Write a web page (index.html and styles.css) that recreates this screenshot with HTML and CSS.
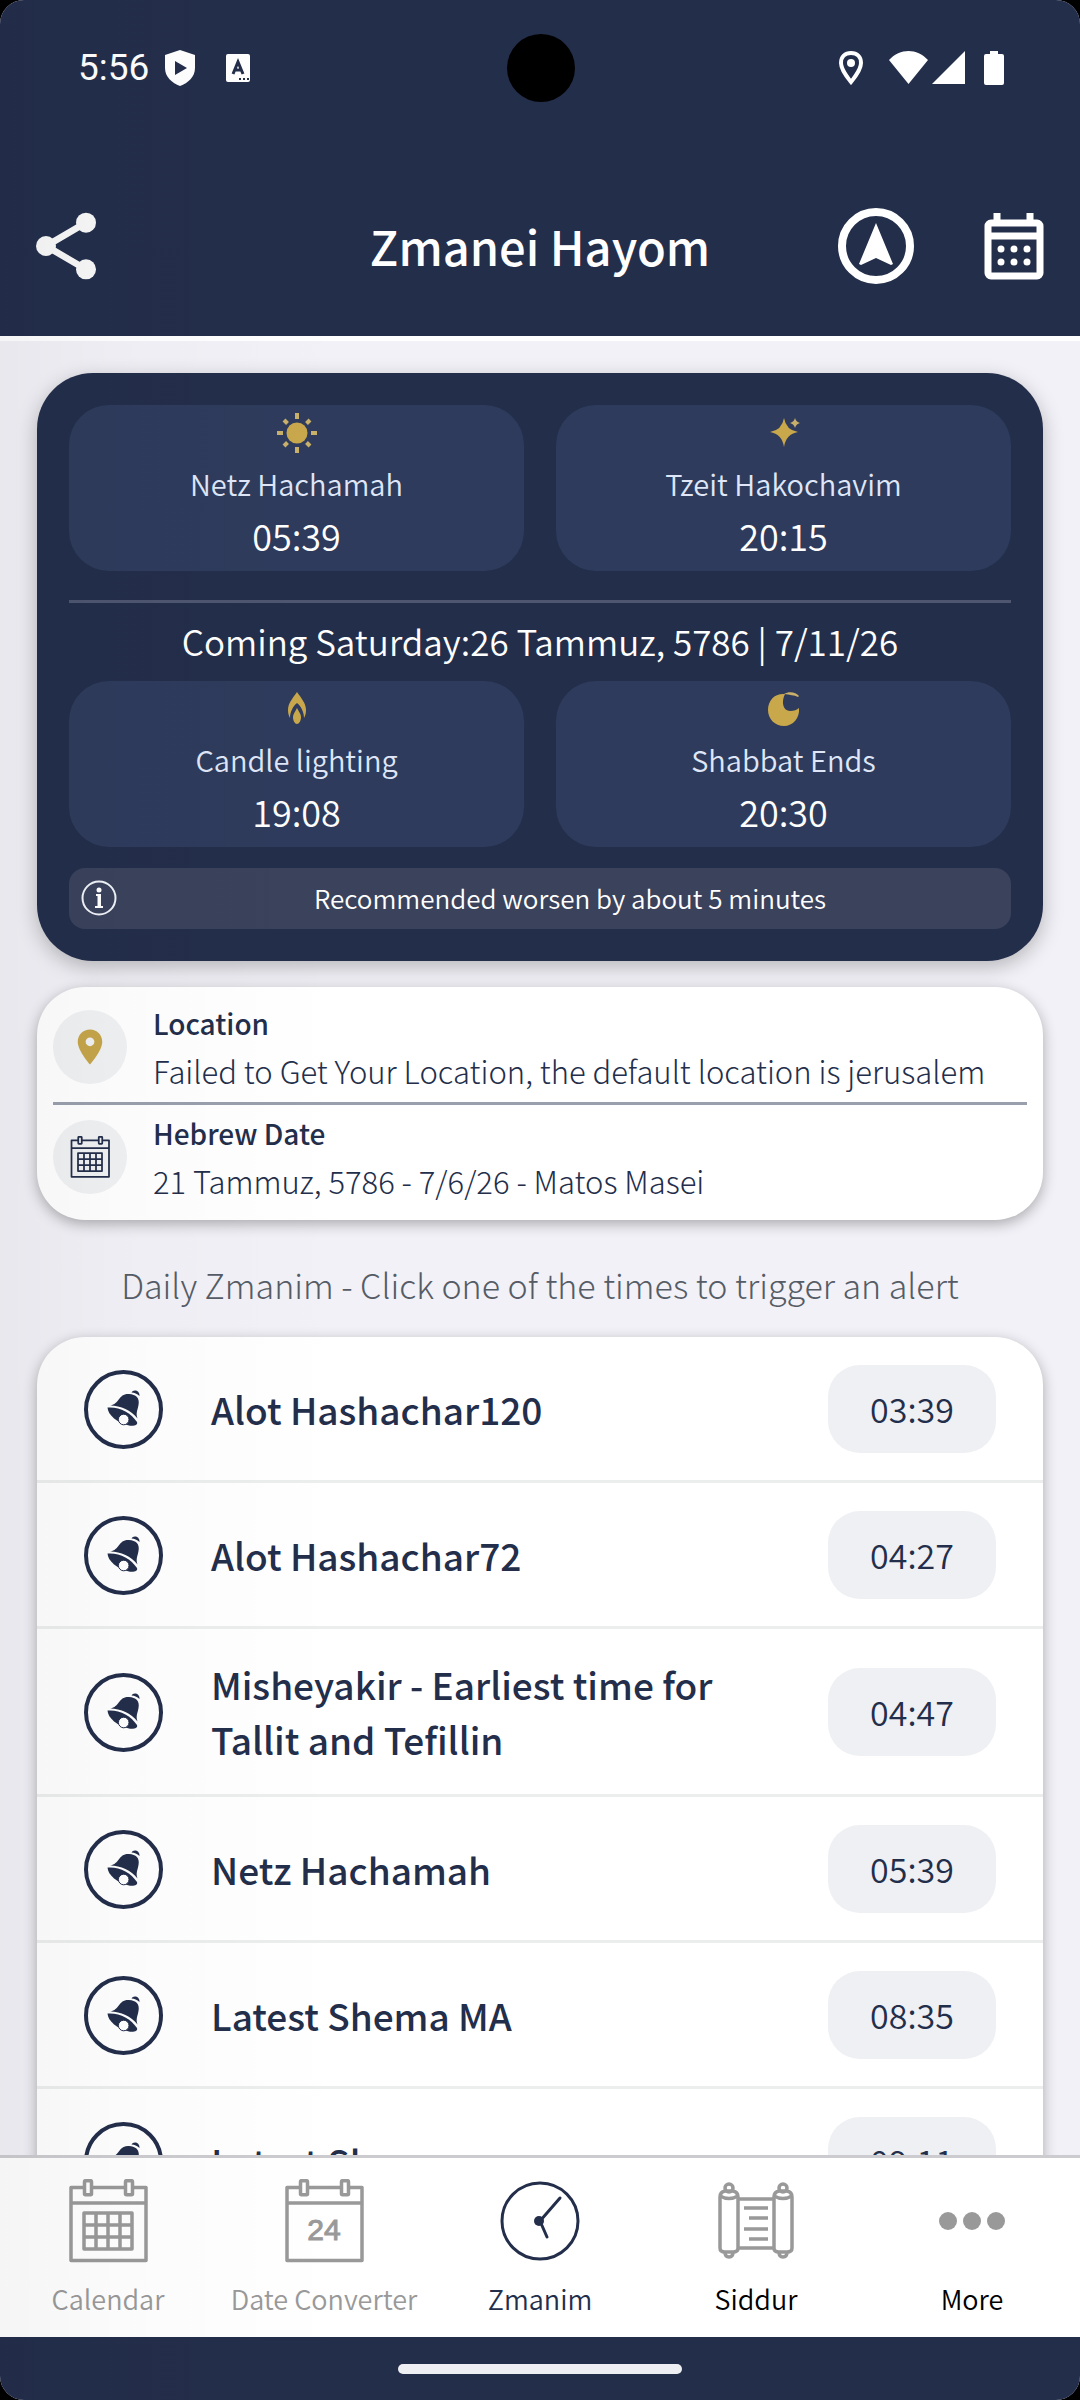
FILE: index.html
```html
<!DOCTYPE html>
<html lang="en">
<head>
    <meta charset="UTF-8">
    <meta name="viewport" content="width=device-width, initial-scale=1.0">
    <title>Zmanei Hayom</title>
    <link rel="stylesheet" href="styles.css">
</head>
<body>
    <!-- shared icons -->
    <svg class="symbols" aria-hidden="true">
        <symbol id="icon-calendar" viewBox="0 0 84 84">
            <g fill="none" stroke="currentColor" stroke-width="3.500" stroke-linejoin="round">
                <path d="M18 8.500H5v73h75v-73H67M26 8.500h33M5 24h75"/>
                <rect x="18.500" y="1.700" width="7" height="14" rx="1"/>
                <rect x="59.500" y="1.700" width="7" height="14" rx="1"/>
                <path d="M18 34h48v36H18zM30 34v36M42 34v36M54 34v36M18 46h48M18 58h48"/>
            </g>
        </symbol>
        <symbol id="icon-bell" viewBox="0 0 40 40">
            <path fill="currentColor" d="M27.500 3.500C29 0 36 1 35.500 7c-2.500-2.500-5-3.300-8-3.500z"/>
            <path fill="currentColor" d="M6 16.500C16 15 14 4.500 25 5c7 .5 11 4 9.500 11-.8 5-3 8-1 13.500C27 21 17 17 6 16.500z"/>
            <path fill="currentColor" d="M3.500 18.500c12-1 23 5 29.500 14.500 1 3-2 4-7 3.700C13 34 4 26 3.500 18.500z"/>
            <circle cx="19.700" cy="30.500" r="5.300" fill="#fff" stroke="currentColor"/>
        </symbol>
    </svg>

    <div class="app">
        <header>
            <div class="status-bar">
                <div class="status-group">
                    <span class="clock">5:56</span>
                    <svg width="30" height="36" viewBox="0 0 30 36"><path fill="#fff" d="M15 0l15 5v13c0 9-7 15-15 18C7 33 0 27 0 18V5z"/><path fill="#232e4b" d="M10 11l12 7-12 7z"/></svg>
                    <svg class="lang-icon" width="24" height="28" viewBox="0 0 24 28"><rect width="24" height="28" rx="2" fill="#fff"/><path d="M7 20l5-12 5 12M9 16h6" fill="none" stroke="#232e4b" stroke-width="3"/><path d="M13 25h2M17 25h2M21 25h2" stroke="#232e4b" stroke-width="2"/></svg>
                </div>
                <span class="camera"></span>
                <div class="status-group status-right">
                    <svg width="24" height="34" viewBox="0 0 24 34"><path d="M12 2C6 2 2 6 2 12c0 7 10 19 10 19s10-12 10-19c0-6-4-10-10-10z" fill="none" stroke="#fff" stroke-width="4"/><circle cx="12" cy="12" r="4" fill="#fff"/></svg>
                    <svg class="wifi" width="76" height="34" viewBox="0 0 76 34"><path fill="#fff" d="M0 9c11-12 28-12 39 0L19.500 33zM43 33L76 0v33z"/></svg>
                    <svg width="20" height="34" viewBox="0 0 20 34"><path fill="#fff" d="M6 0h8v3h4q2 0 2 2v27q0 2-2 2H2q-2 0-2-2V5q0-2 2-2h4z"/></svg>
                </div>
            </div>
            <div class="app-bar">
                <button type="button" class="icon-button" aria-label="Share">
                    <svg viewBox="0 0 24 24"><path d="M18 5L6 12l12 7" fill="none" stroke="#f8f8f8" stroke-width="2"/><circle cx="18" cy="5" r="3" fill="#f8f8f8"/><circle cx="6" cy="12" r="3" fill="#f8f8f8"/><circle cx="18" cy="19" r="3" fill="#f8f8f8"/></svg>
                </button>
                <h1>Zmanei Hayom</h1>
                <div class="actions">
                    <button type="button" class="icon-button" aria-label="Compass">
                        <svg viewBox="0 0 80 80"><circle cx="40" cy="40" r="34" fill="none" stroke="#fff" stroke-width="8"/><path fill="#fff" d="M40 17l17 41-2 1-15-7-15 7-2-1z"/></svg>
                    </button>
                    <button type="button" class="icon-button" aria-label="Pick a date">
                        <svg viewBox="0 0 80 80"><g fill="none" stroke="#fff" stroke-width="7"><rect x="14" y="17" width="52" height="53" rx="3"/><path d="M14 30h52M23 7v9M56 7v9"/></g><g fill="#fff"><circle cx="27" cy="43" r="3.500"/><circle cx="40" cy="43" r="3.500"/><circle cx="53" cy="43" r="3.500"/><circle cx="27" cy="56" r="3.500"/><circle cx="40" cy="56" r="3.500"/><circle cx="53" cy="56" r="3.500"/></g></svg>
                    </button>
                </div>
            </div>
        </header>

        <main>
            <section class="summary">
                <div class="tiles">
                    <div class="tile">
                        <svg viewBox="0 0 40 40"><circle cx="20" cy="20" r="10.500" fill="#c9a84c"/><path d="M20 0v6M20 34v6M0 20h6M34 20h6M7 7l3.500 3.500M29.500 29.500L33 33M7 33l3.500-3.500M29.500 10.500L33 7" stroke="#c9b06a" stroke-width="4"/></svg>
                        <span class="tile-label">Netz Hachamah</span>
                        <span class="tile-time">05:39</span>
                    </div>
                    <div class="tile">
                        <svg viewBox="0 0 40 40"><path fill="#c9a84c" d="M20 5q2 12 14 14-12 2-14 15-2-13-14-15 12-2 14-14z"/><path fill="#c9b06a" d="M31 5q1 4 5 5-4 1-5 5-1-4-5-5 4-1 5-5z"/></svg>
                        <span class="tile-label">Tzeit Hakochavim</span>
                        <span class="tile-time">20:15</span>
                    </div>
                </div>
                <h2>Coming Saturday:26 Tammuz, 5786 | 7/11/26</h2>
                <div class="tiles">
                    <div class="tile">
                        <svg viewBox="0 0 40 40"><path fill="#c9a84c" d="M20 3c4 6 9 11 9 18 0 4-1 6-2 8 0-6-3-12-7-15-4 3-7 9-7 15-1-2-2-4-2-8 0-7 5-12 9-18z"/><path fill="#c9a84c" d="M20 19c2 4 4 6 4 9 0 4-2 7-4 7s-4-3-4-7c0-3 2-5 4-9z"/></svg>
                        <span class="tile-label">Candle lighting</span>
                        <span class="tile-time">19:08</span>
                    </div>
                    <div class="tile">
                        <svg viewBox="0 0 40 40"><path fill="#c9a84c" d="M35 19c1 10-6 18-15 18C11 37 4 30 4 21 4 11 11 4 21 5c-4 8-2 17 5 17 4 0 7-1 9-3z"/><path fill="#c9b06a" d="M20 5c5-3 12-2 15 2l-1 1c-4-2-8-2-14-3z"/></svg>
                        <span class="tile-label">Shabbat Ends</span>
                        <span class="tile-time">20:30</span>
                    </div>
                </div>
                <div class="notice">
                    <svg viewBox="0 0 36 36"><circle cx="18" cy="18" r="16.500" fill="none" stroke="#f0f2f8" stroke-width="2"/><circle cx="18" cy="10" r="2.500" fill="#fff"/><path d="M15 15h4v11M14 27h8" fill="none" stroke="#fff" stroke-width="2"/><path d="M18 15v12" stroke="#fff" stroke-width="3"/></svg>
                    <p>Recommended worsen by about 5 minutes</p>
                </div>
            </section>

            <section class="details">
                <div class="detail">
                    <span class="detail-icon gold"><svg viewBox="0 0 24 24"><path fill="currentColor" d="M12 2C8.100 2 5 5.100 5 9c0 5.200 7 13 7 13s7-7.800 7-13c0-3.900-3.100-7-7-7zm0 9.500a2.500 2.500 0 0 1 0-5 2.500 2.500 0 0 1 0 5z"/></svg></span>
                    <div>
                        <h3>Location</h3>
                        <p>Failed to Get Your Location, the default location is jerusalem</p>
                    </div>
                </div>
                <div class="detail">
                    <span class="detail-icon"><svg><use href="#icon-calendar"/></svg></span>
                    <div>
                        <h3>Hebrew Date</h3>
                        <p>21 Tammuz, 5786 - 7/6/26 - Matos Masei</p>
                    </div>
                </div>
            </section>

            <p class="hint">Daily Zmanim - Click one of the times to trigger an alert</p>

            <ul class="zmanim">
                <li>
                    <span class="bell"><svg><use href="#icon-bell"/></svg></span>
                    <span class="name">Alot Hashachar120</span>
                    <button type="button" class="time">03:39</button>
                </li>
                <li>
                    <span class="bell"><svg><use href="#icon-bell"/></svg></span>
                    <span class="name">Alot Hashachar72</span>
                    <button type="button" class="time">04:27</button>
                </li>
                <li>
                    <span class="bell"><svg><use href="#icon-bell"/></svg></span>
                    <span class="name">Misheyakir - Earliest time for Tallit and Tefillin</span>
                    <button type="button" class="time">04:47</button>
                </li>
                <li>
                    <span class="bell"><svg><use href="#icon-bell"/></svg></span>
                    <span class="name">Netz Hachamah</span>
                    <button type="button" class="time">05:39</button>
                </li>
                <li>
                    <span class="bell"><svg><use href="#icon-bell"/></svg></span>
                    <span class="name">Latest Shema MA</span>
                    <button type="button" class="time">08:35</button>
                </li>
                <li>
                    <span class="bell"><svg><use href="#icon-bell"/></svg></span>
                    <span class="name">Latest Sh</span>
                    <button type="button" class="time">09:11</button>
                </li>
            </ul>
        </main>

        <nav>
            <a href="#calendar">
                <svg><use href="#icon-calendar"/></svg>
                Calendar
            </a>
            <a href="#converter">
                <svg viewBox="0 0 84 84">
                    <g fill="none" stroke="currentColor" stroke-width="3.500" stroke-linejoin="round">
                        <path d="M18 8.500H5v73h75v-73H67M26 8.500h33M5 24h75"/>
                        <rect x="18.500" y="1.700" width="7" height="14" rx="1"/>
                        <rect x="59.500" y="1.700" width="7" height="14" rx="1"/>
                    </g>
                    <text class="day" x="42" y="61" text-anchor="middle">24</text>
                </svg>
                Date Converter
            </a>
            <a href="#zmanim" class="active">
                <svg viewBox="0 0 84 84"><g fill="none" stroke="currentColor" stroke-width="3" stroke-linecap="round"><circle cx="42" cy="42" r="38"/><path d="M42 42l20-23M42 42l7 16"/></g><circle cx="41" cy="42" r="5" fill="currentColor"/></svg>
                Zmanim
            </a>
            <a href="#siddur" class="dark">
                <svg class="grey" viewBox="0 0 84 84">
                    <g fill="none" stroke="currentColor" stroke-width="3.500" stroke-linejoin="round">
                        <path d="M6 18q0-5 5-6h8q5 1 5 6v51q0 4-5 4h-8q-5 0-5-4zM60 18q0-5 5-6h8q5 1 5 6v51q0 4-5 4h-8q-5 0-5-4z"/>
                        <path d="M6 17q9 5 18 0M60 17q9 5 18 0M24 20h36M24 69h36"/>
                        <circle cx="15" cy="9" r="4"/>
                        <circle cx="69" cy="9" r="4"/>
                        <path d="M11 73q0 5 4 5t4-5M65 73q0 5 4 5t4-5M30 29h24M35 39h19M30 50h24M35 60h19"/>
                    </g>
                </svg>
                Siddur
            </a>
            <a href="#more" class="dark">
                <svg class="grey" viewBox="0 0 84 84"><g fill="currentColor"><circle cx="18" cy="42" r="9"/><circle cx="42" cy="42" r="9"/><circle cx="66" cy="42" r="9"/></g></svg>
                More
            </a>
        </nav>
        <div class="gesture-bar"><span></span></div>
    </div>
</body>
</html>
```
FILE: styles.css
```css
* {
    box-sizing: border-box;
}
html {
    background-color: #000;
}
body {
    margin: 0;
    font-family: 'Noto Sans CJK SC', 'Noto Sans', sans-serif;
    font-size: 29px;
    font-weight: 350;
    line-height: 48px;
    color: #232e4b;
}
h1, h2, h3, p, ul {
    margin: 0;
    padding: 0;
}
button {
    padding: 0;
    border: none;
    background: none;
    font: inherit;
    color: inherit;
    cursor: pointer;
}
svg {
    display: block;
    flex-shrink: 0;
}
.symbols {
    position: absolute;
    width: 0;
    height: 0;
}
.app {
    position: relative;
    display: flex;
    flex-direction: column;
    height: 100vh;
    border-radius: 24px;
    overflow: hidden;
    background-color: #f2f1f7;
}
/* soft shade along the left edge */
.app::after {
    content: '';
    position: absolute;
    inset: 0;
    background: linear-gradient(to right, rgba(0, 0, 0, 0.04), rgba(0, 0, 0, 0.014) 120px, transparent 350px);
    pointer-events: none;
}

/* header */
header {
    flex-shrink: 0;
    background-color: #232e4b;
    border-bottom: 5px solid #fff;
    color: #fff;
}
.status-bar {
    display: grid;
    grid-template-columns: 1fr auto 1fr;
    align-items: center;
    height: 136px;
    padding: 0 76px 0 78px;
}
.status-group {
    display: flex;
    align-items: center;
}
.status-right {
    justify-content: flex-end;
    gap: 19px;
}
.clock {
    margin-right: 16px;
    font-family: Roboto, sans-serif;
    font-size: 37px;
    font-weight: 400;
}
.lang-icon {
    margin-left: 31px;
}
.wifi {
    margin-left: 7px;
}
.camera {
    width: 68px;
    height: 68px;
    border-radius: 50%;
    background-color: #000;
}
.app-bar {
    display: grid;
    grid-template-columns: 1fr auto 1fr;
    align-items: center;
    height: 200px;
    padding: 20px 26px 0;
}
h1 {
    font-size: 47px;
    font-weight: 500;
    line-height: 72px;
}
.icon-button, .icon-button svg {
    width: 80px;
    height: 80px;
}
.actions {
    display: flex;
    justify-content: flex-end;
    gap: 58px;
}

/* content */
main {
    flex: 1;
    min-height: 0;
    padding: 32px 37px 0;
    overflow: hidden;
}
.summary {
    padding: 32px;
    border-radius: 56px;
    background-color: #232e4b;
    box-shadow: 0 6px 20px rgba(0, 0, 0, 0.25);
    color: #fff;
}
.tiles {
    display: grid;
    grid-template-columns: 1fr 1fr;
    gap: 32px;
}
.tile {
    display: flex;
    flex-direction: column;
    align-items: center;
    padding: 8px;
    border-radius: 40px;
    background-color: #2e3b5c;
}
.tile svg {
    width: 40px;
    height: 40px;
    margin-bottom: 6px;
}
.tile-label {
    color: #dfe6f8;
}
.tile-time {
    font-size: 36px;
    line-height: 56px;
}
h2 {
    margin-top: 29px;
    padding: 10px 0 12px;
    border-top: 3px solid #4e5670;
    font-size: 35px;
    font-weight: 350;
    line-height: 56px;
    text-align: center;
}
.notice {
    display: flex;
    align-items: center;
    gap: 12px;
    margin-top: 21px;
    padding: 6px 0 7px 12px;
    border-radius: 16px;
    background-color: #3a425c;
    font-size: 26px;
}
.notice svg {
    width: 36px;
    height: 36px;
}
.notice p {
    flex: 1;
    text-align: center;
}
.details {
    margin-top: 26px;
    padding: 12px 16px 15px;
    border-radius: 48px;
    background-color: #fff;
    box-shadow: 0 4px 14px rgba(0, 0, 0, 0.3);
}
.detail {
    display: flex;
    align-items: center;
    gap: 26px;
}
.detail + .detail {
    margin-top: 7px;
    padding-top: 4px;
    border-top: 3px solid #9a9fae;
}
.detail-icon {
    display: flex;
    align-items: center;
    justify-content: center;
    width: 74px;
    height: 74px;
    border-radius: 50%;
    background-color: #eff1f3;
}
.detail-icon svg {
    width: 42px;
    height: 42px;
}
.gold {
    color: #c5a54a;
}
h3 {
    font-size: 28px;
    font-weight: 500;
}
.detail p {
    font-size: 31px;
    font-weight: 300;
}
.hint {
    margin: 37px 0 24px;
    color: #555c66;
    font-size: 34px;
    font-weight: 300;
    line-height: 56px;
    text-align: center;
}
.zmanim {
    border-radius: 48px;
    background-color: #fff;
    box-shadow: 0 4px 14px rgba(0, 0, 0, 0.3);
    list-style: none;
}
.zmanim li {
    display: flex;
    align-items: center;
    gap: 48px;
    padding: 28px 47px 27px;
    border-bottom: 3px solid #eceded;
}
.bell {
    display: flex;
    align-items: center;
    justify-content: center;
    width: 79px;
    height: 79px;
    border: 4px solid #232e4b;
    border-radius: 50%;
}
.bell svg {
    width: 40px;
    height: 40px;
}
.name {
    flex: 1;
    font-size: 37px;
    font-weight: 500;
    line-height: 55px;
}
.time {
    width: 168px;
    height: 88px;
    border-radius: 32px;
    background-color: #eff0f4;
    font-size: 34px;
}

/* bottom navigation */
nav {
    display: grid;
    grid-template-columns: repeat(5, 1fr);
    flex-shrink: 0;
    border-top: 3px solid #ccccd0;
    background-color: #fff;
}
nav a {
    display: flex;
    flex-direction: column;
    align-items: center;
    gap: 16px;
    padding: 21px 0 18px;
    color: #999;
    font-size: 27px;
    line-height: 40px;
    text-decoration: none;
}
nav svg {
    width: 84px;
    height: 84px;
}
nav .active {
    color: #232e4b;
}
nav .dark {
    color: #000;
}
nav .grey {
    color: #999;
}
.day {
    fill: currentColor;
    stroke: currentColor;
    font: 30px 'Liberation Sans', sans-serif;
}
.gesture-bar {
    display: flex;
    align-items: center;
    justify-content: center;
    flex-shrink: 0;
    height: 63px;
    background-color: #232e4b;
}
.gesture-bar span {
    width: 284px;
    height: 10px;
    border-radius: 5px;
    background-color: #eeeff2;
}
```
